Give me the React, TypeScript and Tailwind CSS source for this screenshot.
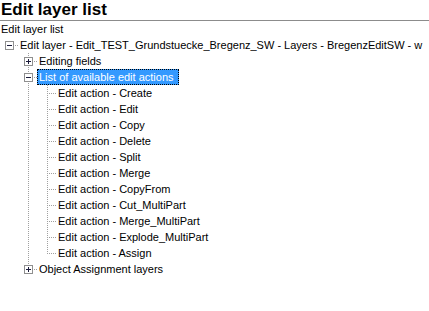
import React from "react";

type Row = {
  level: number;
  label: string;
  guides: boolean[];
  hasPrev: boolean;
  hasNext: boolean;
  box?: "plus" | "minus";
  selected?: boolean;
};

const actions = [
  "Create",
  "Edit",
  "Copy",
  "Delete",
  "Split",
  "Merge",
  "CopyFrom",
  "Cut_MultiPart",
  "Merge_MultiPart",
  "Explode_MultiPart",
  "Assign",
];

const rows: Row[] = [
  {
    level: 0,
    label: "Edit layer - Edit_TEST_Grundstuecke_Bregenz_SW - Layers - BregenzEditSW - w",
    guides: [],
    hasPrev: false,
    hasNext: false,
    box: "minus",
  },
  { level: 1, label: "Editing fields", guides: [false], hasPrev: true, hasNext: true, box: "plus" },
  {
    level: 1,
    label: "List of available edit actions",
    guides: [false],
    hasPrev: true,
    hasNext: true,
    box: "minus",
    selected: true,
  },
  ...actions.map((a, i) => ({
    level: 2,
    label: `Edit action - ${a}`,
    guides: [false, true],
    hasPrev: true,
    hasNext: i < actions.length - 1,
  })),
  { level: 1, label: "Object Assignment layers", guides: [false], hasPrev: true, hasNext: false, box: "plus" },
];

const DOT = "#a0a0a0";

function TreeLines({ row }: { row: Row }) {
  const w = 19 * (row.level + 1) - 1;
  const c = 19 * row.level + 9;
  return (
    <svg width={w} height={16} className="shrink-0" shapeRendering="crispEdges">
      {row.guides.map((g, k) =>
        g ? (
          <line key={k} x1={19 * k + 9.5} x2={19 * k + 9.5} y1={0} y2={16} stroke={DOT} strokeDasharray="1 1" />
        ) : null
      )}
      {row.hasPrev && <line x1={c + 0.5} x2={c + 0.5} y1={0} y2={8} stroke={DOT} strokeDasharray="1 1" />}
      {row.hasNext && <line x1={c + 0.5} x2={c + 0.5} y1={8} y2={16} stroke={DOT} strokeDasharray="1 1" />}
      <line x1={c} x2={w} y1={8.5} y2={8.5} stroke={DOT} strokeDasharray="1 1" />
      {row.box && (
        <g>
          <rect x={c - 3.5} y={4.5} width={8} height={8} fill="#ffffff" stroke="#8f8f8f" />
          <line x1={c - 2} x2={c + 3} y1={8.5} y2={8.5} stroke="#1a1a3a" />
          {row.box === "plus" && <line x1={c + 0.5} x2={c + 0.5} y1={6} y2={11} stroke="#1a1a3a" />}
        </g>
      )}
    </svg>
  );
}

export default function App() {
  return (
    <div className="w-[429px] h-[311px] overflow-hidden bg-white text-black font-['Liberation_Sans',Arial,sans-serif]">
      <div className="h-[21px] border-b border-[#8c8c8c] pl-[1px] text-[17px] leading-[20px] font-bold whitespace-nowrap">
        Edit layer list
      </div>
      <div className="h-[16px] pl-[1px] text-[11px] leading-[16px] whitespace-nowrap">Edit layer list</div>
      <div className="flex flex-col text-[11px]">
        {rows.map((r, i) => (
          <div key={i} className="flex items-start h-[16px] whitespace-nowrap">
            <TreeLines row={r} />
            {r.selected ? (
              <span className="h-[16px] leading-[14px] pl-[1px] pr-[4px] bg-[#3399ff] text-white border border-dotted border-black">
                {r.label}
              </span>
            ) : (
              <span className="h-[16px] leading-[16px] px-[2px]">{r.label}</span>
            )}
          </div>
        ))}
      </div>
    </div>
  );
}
